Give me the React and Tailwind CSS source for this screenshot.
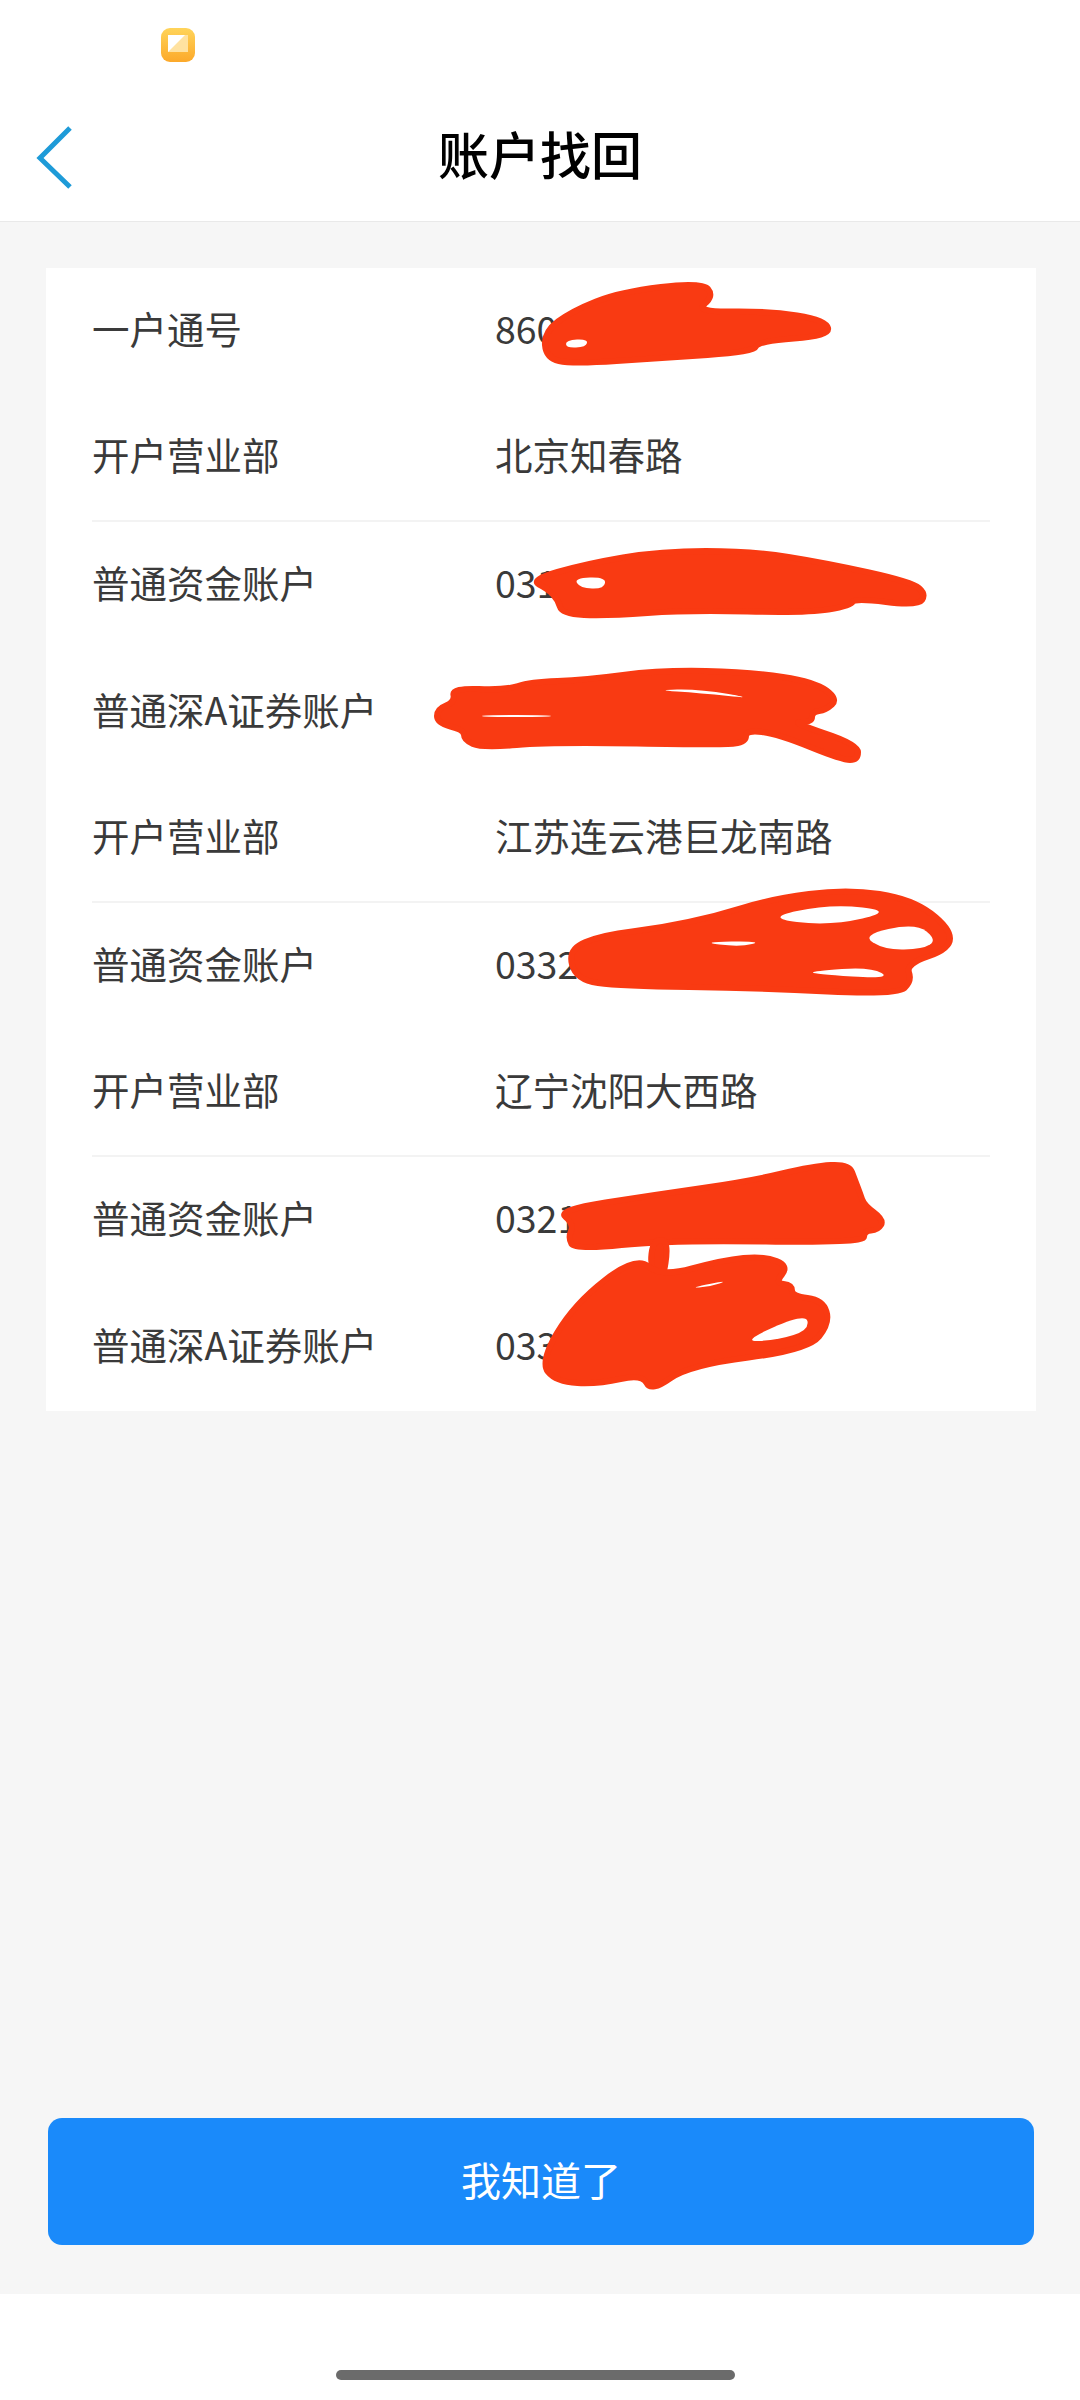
const rows = [
  { label: "一户通号", value: "860" },
  { label: "开户营业部", value: "北京知春路", divider: true },
  { label: "普通资金账户", value: "031" },
  { label: "普通深A证券账户", value: "" },
  { label: "开户营业部", value: "江苏连云港巨龙南路", divider: true },
  { label: "普通资金账户", value: "0332" },
  { label: "开户营业部", value: "辽宁沈阳大西路", divider: true },
  { label: "普通资金账户", value: "0321" },
  { label: "普通深A证券账户", value: "033" },
];

// the red marker scribbles drawn over the account numbers
const scribbles = [
  "702,282 714,296 695,312 768,311 826,320 830,336 758,341 754,352 661,358 572,364 546,358 544,332 572,311 620,292",
  "530,580 585,564 661,551 751,551 826,563 912,582 926,594 918,606 854,598 851,606 806,613 689,610 606,616 562,614 558,600 548,589",
  "452,688 506,690 530,682 585,680 661,670 751,672 815,682 838,699 826,710 812,712 812,722 790,722 858,744 858,760 842,760 778,734 746,730 746,742 723,745 551,742 482,748 464,740 464,730 437,723 437,709 455,702",
  "568,949 603,935 661,928 716,916 771,899 847,889 912,899 950,928 950,949 906,964 912,981 897,995 758,988 620,986 576,980",
  "557,1210 654,1195 751,1181 813,1166 849,1164 855,1180 860,1193 864,1205 884,1220 878,1230 864,1231 864,1243 668,1240 575,1250 568,1238 574,1224",
  "653,1240 669,1240 662,1286 650,1268",
  "540,1362 574,1304 636,1256 661,1277 723,1260 764,1256 789,1266 775,1283 792,1285 792,1296 823,1300 830,1323 808,1350 689,1365 651,1392 642,1374 599,1384 556,1382",
];

const gaps = [
  "566,340 588,339 586,347 566,348",
  "574,578 606,577 604,589 580,588",
  "654,690 700,689 757,699 700,693",
  "482,715 551,715 551,717 482,717",
  "764,918 830,904 895,911 830,926",
  "861,935 916,923 937,940 923,949 885,950",
  "699,942 764,941 740,947",
  "813,971 871,967 892,979 813,974",
  "689,1288 730,1280 709,1287",
  "740,1342 806,1313 809,1330 778,1340",
];

// round off a polygon into a hand drawn looking closed curve
const smooth = (points) => {
  const pts = points.split(" ").map((p) => p.split(",").map(Number));
  const mid = (a, b) => [(a[0] + b[0]) / 2, (a[1] + b[1]) / 2];
  const start = mid(pts[pts.length - 1], pts[0]);
  let d = `M${start[0]} ${start[1]}`;
  pts.forEach((p, i) => {
    const m = mid(p, pts[(i + 1) % pts.length]);
    d += ` Q${p[0]} ${p[1]} ${m[0]} ${m[1]}`;
  });
  return d + " Z";
};

function Scribbles() {
  return (
    <svg className="absolute left-0 top-0 w-[1080px] h-[2400px] pointer-events-none" viewBox="0 0 1080 2400" fill="none">
      {scribbles.map((points, i) => (
        <path key={i} d={smooth(points)} fill="#f93a12" stroke="#f93a12" strokeWidth="6" strokeLinejoin="round" />
      ))}
      {gaps.map((points, i) => (
        <path key={i} d={smooth(points)} fill="#ffffff" />
      ))}
    </svg>
  );
}

export default function App() {
  return (
    <div className="relative h-[2400px] w-[1080px] flex flex-col bg-[#f6f6f6] font-['Noto_Sans_CJK_SC','Noto_Sans',sans-serif] overflow-hidden">
      <header className="bg-white border-b border-[#e9e9e9] h-[222px] flex flex-col shrink-0">
        <div className="h-[92px] pt-[28px] pl-[161px]">
          <svg width="34" height="34" viewBox="0 0 34 34">
            <defs>
              <linearGradient id="appIcon" x1="0" y1="0" x2="0" y2="1">
                <stop offset="0" stopColor="#ffd45a" />
                <stop offset="1" stopColor="#fca92a" />
              </linearGradient>
            </defs>
            <rect width="34" height="34" rx="9" fill="url(#appIcon)" />
            <rect x="7" y="7" width="20" height="17" fill="#ffe2a0" />
            <polygon points="7,7 24,7 7,24" fill="#ffffff" />
          </svg>
        </div>
        <div className="flex items-center h-[129px]">
          <div className="w-[140px] pl-[36px]">
            <svg width="38" height="64" viewBox="0 0 38 64" fill="none" stroke="#1e9bd8" strokeWidth="5" strokeLinecap="butt" strokeLinejoin="miter">
              <path d="M34 3 L4 33 L34 62" />
            </svg>
          </div>
          <h1 className="flex-1 text-center text-[51px] leading-none font-medium text-black mb-[6px]">账户找回</h1>
          <div className="w-[140px]" />
        </div>
      </header>

      <main className="flex-1 flex flex-col">
        <section className="mt-[46px] ml-[46px] mr-[44px] bg-white px-[46px]">
          {rows.map((row, i) => (
            <div key={i} className={`h-[127px] pb-[6px] flex items-center text-[37.5px] text-[#3a3a3a] ${row.divider ? "border-b-2 border-[#f3f3f3]" : ""}`}>
              <span className="w-[403px] whitespace-nowrap">{row.label}</span>
              <span className="whitespace-nowrap">{row.value}</span>
            </div>
          ))}
        </section>

        <div className="mt-auto pb-[49px] pl-[48px] pr-[46px]">
          <button className="w-full h-[127px] pb-[6px] rounded-[14px] bg-[#1a8afa] text-white text-[40px]">我知道了</button>
        </div>
      </main>

      <footer className="h-[106px] bg-white shrink-0 flex justify-center pt-[76px] pr-[9px]">
        <div className="w-[399px] h-[10px] rounded-full bg-[#6b6b6b]" />
      </footer>

      <Scribbles />
    </div>
  );
}
